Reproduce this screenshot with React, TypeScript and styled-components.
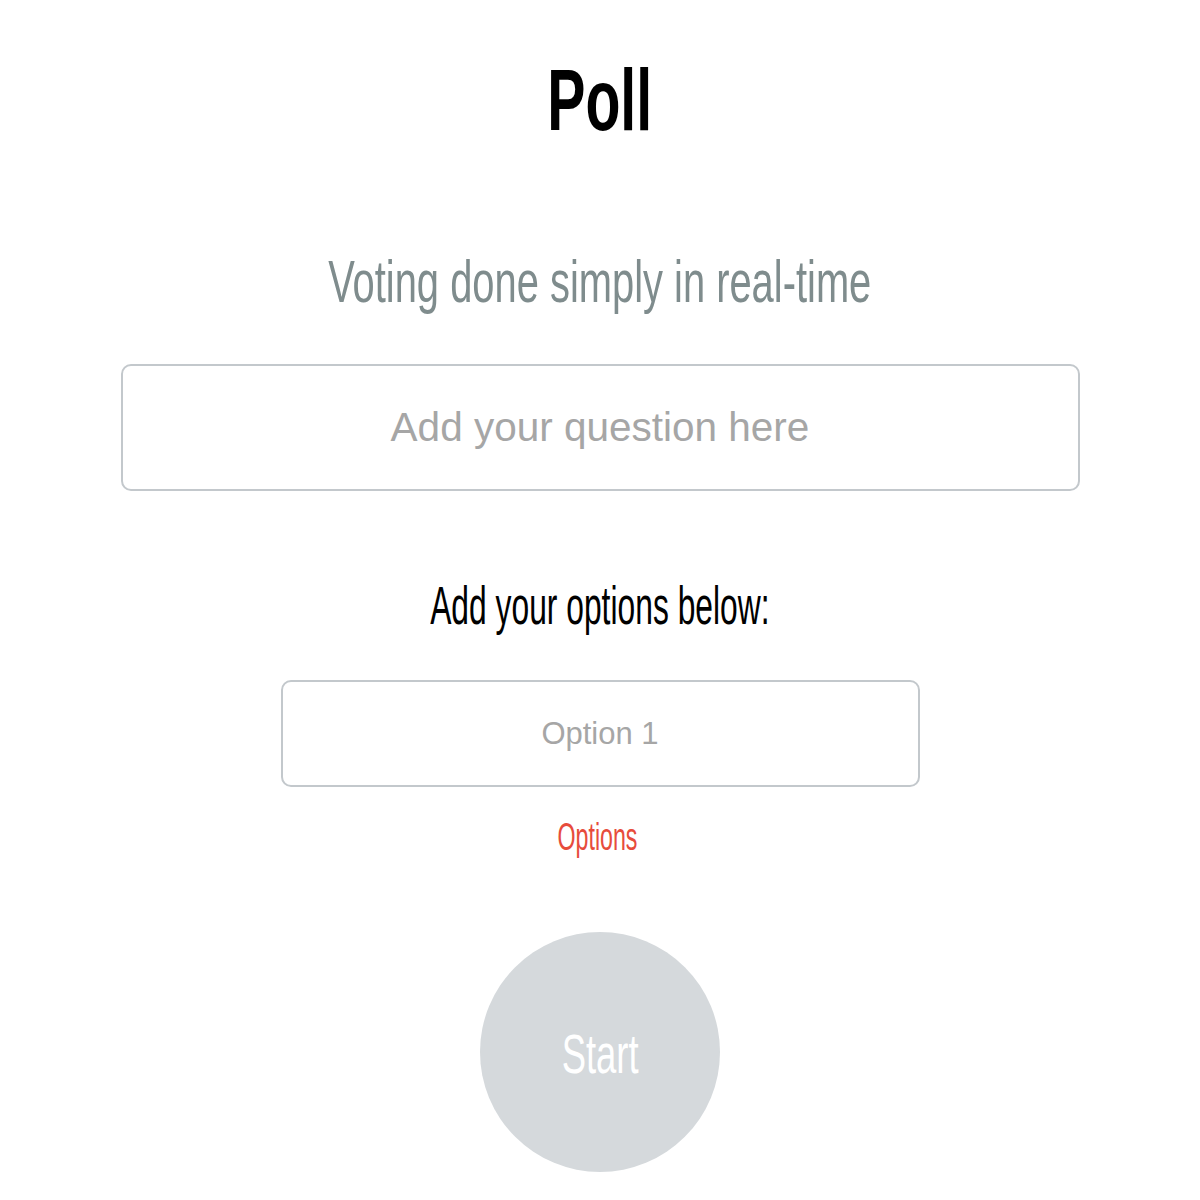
import React from "react";
import styled, { createGlobalStyle } from "styled-components";

const GlobalStyle = createGlobalStyle`
  html, body {
    margin: 0;
    padding: 0;
    background: #ffffff;
  }
  body {
    font-family: "Liberation Sans", Arial, sans-serif;
  }
  * { box-sizing: border-box; }
`;

const Page = styled.main`
  display: flex;
  flex-direction: column;
  align-items: center;
  padding-top: 56px;
  width: 1200px;
`;

const Condensed = styled.span<{ $scale: number }>`
  display: inline-block;
  white-space: nowrap;
  transform: scaleX(${(p) => p.$scale});
  transform-origin: center;
`;

const Title = styled.h1`
  margin: 0;
  font-family: "Liberation Sans", Arial, sans-serif;
  font-weight: 700;
  font-size: 88px;
  line-height: 88px;
  height: 88px;
  color: #000000;
  text-align: center;
`;

const Subtitle = styled.h2`
  margin: 109px 0 0;
  font-family: "Liberation Sans", Arial, sans-serif;
  font-weight: 400;
  font-size: 59px;
  line-height: 59px;
  height: 59px;
  color: #7f8c8d;
  text-align: center;
`;

const TextField = styled.input<{ $width: number; $height: number; $size: number }>`
  display: block;
  width: ${(p) => p.$width}px;
  height: ${(p) => p.$height}px;
  border: 2px solid #c3c8cc;
  border-radius: 10px;
  background: #ffffff;
  font-family: "Liberation Sans", Arial, sans-serif;
  font-size: ${(p) => p.$size}px;
  text-align: center;
  color: #333;
  outline: none;
  padding: 0 16px;

  &::placeholder {
    color: #a6a6a6;
    opacity: 1;
  }
`;

const QuestionField = styled(TextField)`
  margin-top: 52px;
`;

const SectionLabel = styled.h3`
  margin: 88px 0 0;
  font-family: "Liberation Sans", Arial, sans-serif;
  font-weight: 400;
  font-size: 53px;
  line-height: 53px;
  height: 53px;
  color: #000000;
  text-align: center;
`;

const OptionField = styled(TextField)`
  margin-top: 48px;
`;

const OptionsHint = styled.p`
  margin: 31px 0 0;
  padding-right: 5px;
  font-family: "Liberation Sans", Arial, sans-serif;
  font-weight: 400;
  font-size: 38px;
  line-height: 38px;
  height: 38px;
  color: #e74c3c;
  text-align: center;
`;

const StartButton = styled.button`
  margin-top: 76px;
  width: 240px;
  height: 240px;
  border-radius: 50%;
  border: none;
  background: #d5d9dc;
  color: #ffffff;
  display: flex;
  align-items: center;
  justify-content: center;
  font-family: "Liberation Sans", Arial, sans-serif;
  font-size: 56px;
  line-height: 56px;
  padding: 4px 0 0;
  cursor: pointer;
`;

export default function App() {
  return (
    <>
      <GlobalStyle />
      <Page>
        <Title>
          <Condensed $scale={0.65}>Poll</Condensed>
        </Title>
        <Subtitle>
          <Condensed $scale={0.676}>Voting done simply in real-time</Condensed>
        </Subtitle>
        <QuestionField
          $width={959}
          $height={127}
          $size={40.5}
          placeholder="Add your question here"
        />
        <SectionLabel>
          <Condensed $scale={0.6}>Add your options below:</Condensed>
        </SectionLabel>
        <OptionField $width={639} $height={107} $size={31} placeholder="Option 1" />
        <OptionsHint>
          <Condensed $scale={0.61}>Options</Condensed>
        </OptionsHint>
        <StartButton>
          <Condensed $scale={0.65}>Start</Condensed>
        </StartButton>
      </Page>
    </>
  );
}
